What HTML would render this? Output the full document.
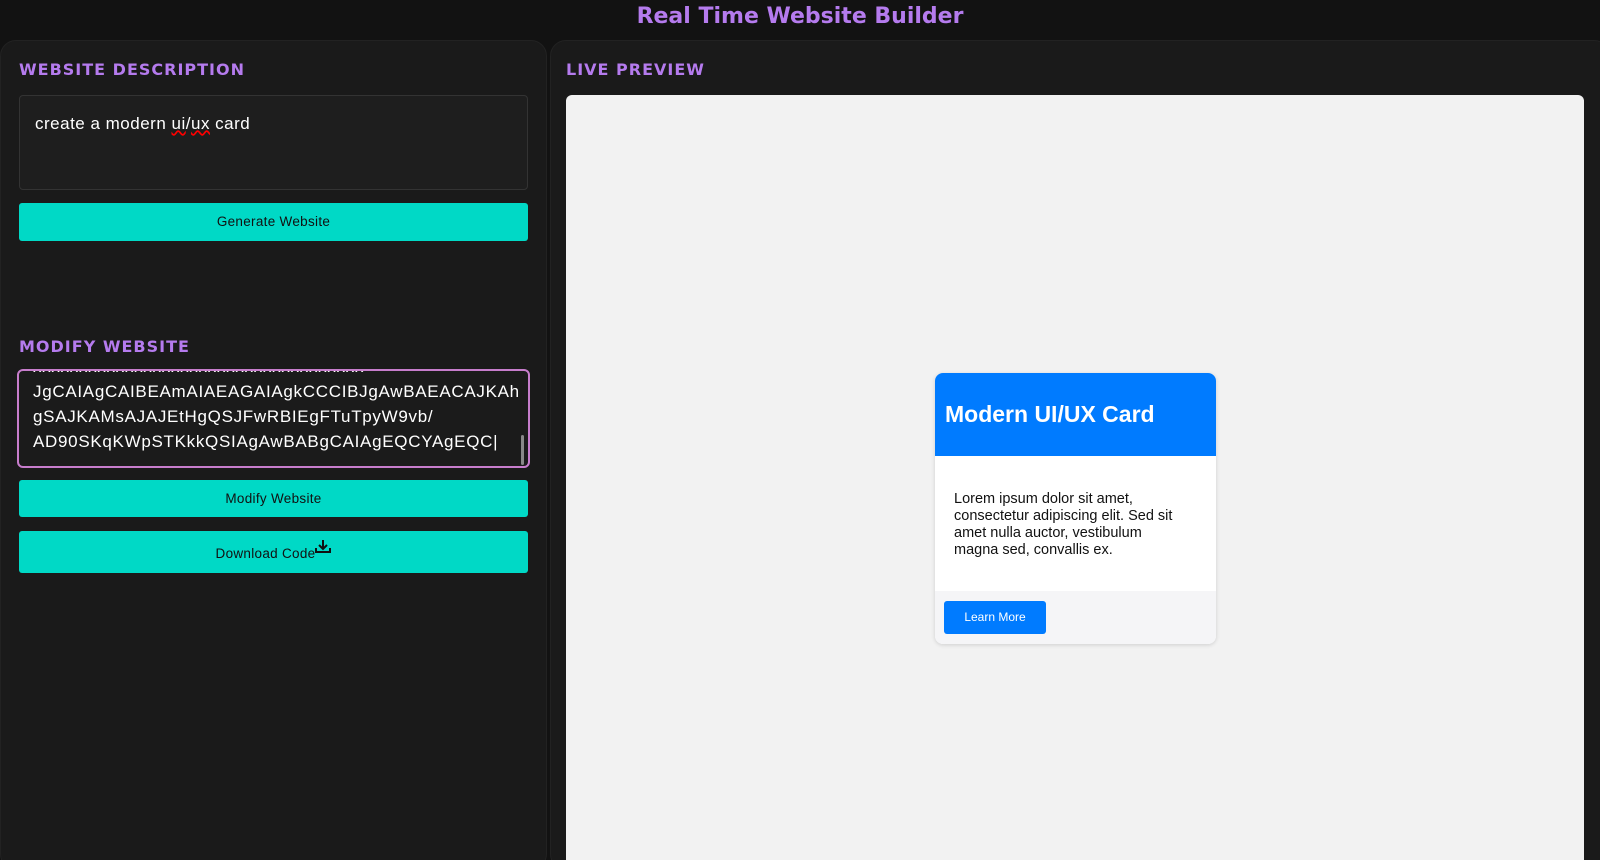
<!DOCTYPE html>
<html><head><meta charset="utf-8"><style>
*{box-sizing:border-box;margin:0;padding:0}
html,body{width:1600px;height:860px;overflow:hidden}
body{background:#121212;position:relative;font-family:"Liberation Sans",sans-serif}
.abs{position:absolute}
h1{position:absolute;top:4px;left:0;width:1600px;text-align:center;font:bold 22px "DejaVu Sans",sans-serif;color:#b57bee}
.panel{background:#1a1a1a;border-radius:16px;border:1px solid #222}
.h{font:bold 16px "DejaVu Sans",sans-serif;color:#b57bee;letter-spacing:1px}
.ta{background:#1e1e1e;border:1px solid #333;border-radius:4px;color:#fff;font-size:17px;letter-spacing:0.5px}
.btn{background:#00d9c6;border-radius:3px;color:#111;font-size:13.5px;text-align:center;letter-spacing:0.3px}
</style></head><body>
<h1>Real Time Website Builder</h1>
<div class="abs panel" style="left:0;top:40px;width:547px;height:830px"></div>
<div class="abs panel" style="left:550px;top:40px;width:1060px;height:830px"></div>
<div class="abs h" style="left:19px;top:60px">WEBSITE DESCRIPTION</div>
<div class="abs h" style="left:566px;top:60px">LIVE PREVIEW</div>
<div class="abs ta" style="left:19px;top:95px;width:509px;height:95px;padding:18px 15px">create a modern <span style="text-decoration:underline wavy red">ui</span>/<span style="text-decoration:underline wavy red">ux</span> card</div>
<div class="abs btn" style="left:19px;top:203px;width:509px;height:38px;line-height:38px">Generate Website</div>
<div class="abs h" style="left:19px;top:337px">MODIFY WEBSITE</div>
<div class="abs ta" style="left:17px;top:369px;width:513px;height:99px;border:2px solid #c77dcc;background:#1b1b1b;padding:2px 14px;line-height:25px;font-size:17px;letter-spacing:0.7px;overflow:hidden;border-radius:6px;white-space:nowrap">
<div style="margin-top:-19px">xxxxxxxxxxxxxxxxxxxxxxxxxxxxxxxxxxxx</div>
<div>JgCAIAgCAIBEAmAIAEAGAIAgkCCCIBJgAwBAEACAJKAh</div>
<div>gSAJKAMsAJAJEtHgQSJFwRBIEgFTuTpyW9vb/</div>
<div>AD90SKqKWpSTKkkQSIAgAwBABgCAIAgEQCYAgEQC|</div>
<div class="abs" style="right:4px;top:64px;width:3px;height:30px;background:#888;border-radius:2px"></div>
</div>
<div class="abs btn" style="left:19px;top:480px;width:509px;height:37px;line-height:37px">Modify Website</div>
<div class="abs btn" style="left:19px;top:531px;width:509px;height:42px;line-height:46px">Download Code<svg width="16" height="14" viewBox="0 0 16 14" style="vertical-align:4px"><path d="M8 0v8M4 5l4 4 4-4M1 8v4h14V8" fill="none" stroke="#111" stroke-width="2"/></svg></div>
<div class="abs" style="left:566px;top:95px;width:1018px;height:765px;background:#f2f2f2;border-radius:6px 6px 0 0"></div>
<div class="abs" style="left:935px;top:373px;width:281px;height:271px;background:#fff;border-radius:8px;box-shadow:0 1px 4px rgba(0,0,0,.15);overflow:hidden">
<div style="background:#007bff;height:83px;color:#fff;font:bold 23px 'Liberation Sans',sans-serif;padding:28px 10px">Modern UI/UX Card</div>
<div style="padding:35px 28px 0 19px;font-size:14.5px;line-height:17px;color:#111;height:135px">Lorem ipsum dolor sit amet, consectetur adipiscing elit. Sed sit amet nulla auctor, vestibulum magna sed, convallis ex.</div>
<div style="background:#f5f5f7;height:53px;padding:10px 9px">
<div style="width:102px;height:33px;background:#007bff;border-radius:3px;color:#fff;font-size:12px;text-align:center;line-height:33px">Learn More</div></div>
</div>
</body></html>
